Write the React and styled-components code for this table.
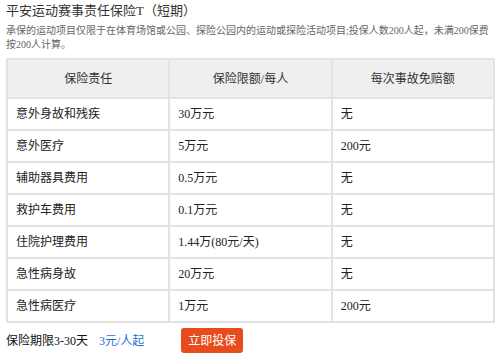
import React from "react";
import styled, { createGlobalStyle } from "styled-components";

const GlobalStyle = createGlobalStyle`
  body {
    margin: 0;
    background: #fff;
    font-family: "Liberation Serif", "Noto Sans CJK SC", serif;
  }
`;

const Page = styled.div`
  width: 500px;
  height: 359px;
  box-sizing: border-box;
  padding: 2px 5px 0 6px;
  color: #333;
`;

const Title = styled.h1`
  margin: 0;
  font-size: 13px;
  font-weight: normal;
  line-height: 17px;
  color: #333;
`;

const Desc = styled.p`
  margin: 5px 0 0;
  font-size: 10px;
  line-height: 14px;
  color: #666;
`;

const Table = styled.table`
  width: 489px;
  margin-top: 6px;
  border-collapse: collapse;
  table-layout: fixed;
  border: 2px solid #e3e3e3;
`;

const HeadCell = styled.th`
  height: 37px;
  padding: 0;
  line-height: 16px;
  background: #efefef;
  border: 2px solid #e3e3e3;
  font-size: 12px;
  font-weight: normal;
  color: #333;
  text-align: center;
`;

const Cell = styled.td`
  height: 30px;
  border: 2px solid #e3e3e3;
  padding: 0 0 0 8px;
  line-height: 16px;
  font-size: 12px;
  color: #222;
`;

const Footer = styled.div`
  display: flex;
  align-items: center;
  margin-top: 4px;
  height: 26px;
`;

const Period = styled.span`
  font-size: 12px;
  color: #111;
`;

const Price = styled.span`
  margin-left: 11px;
  font-size: 12px;
  color: #1f6fd1;
`;

const BuyButton = styled.button`
  margin-left: 37px;
  width: 62px;
  height: 25px;
  border: none;
  border-radius: 3px;
  background: #e84c1d;
  color: #fff;
  font-family: inherit;
  font-size: 12px;
  padding: 0;
  cursor: pointer;
`;

const rows = [
  ["意外身故和残疾", "30万元", "无"],
  ["意外医疗", "5万元", "200元"],
  ["辅助器具费用", "0.5万元", "无"],
  ["救护车费用", "0.1万元", "无"],
  ["住院护理费用", "1.44万(80元/天)", "无"],
  ["急性病身故", "20万元", "无"],
  ["急性病医疗", "1万元", "200元"],
];

export default function App() {
  return (
    <Page>
      <GlobalStyle />
      <Title>平安运动赛事责任保险T（短期）</Title>
      <Desc>
        承保的运动项目仅限于在体育场馆或公园、探险公园内的运动或探险活动项目;投保人数200人起，未满200保费按200人计算。
      </Desc>
      <Table>
        <thead>
          <tr>
            <HeadCell>保险责任</HeadCell>
            <HeadCell>保险限额/每人</HeadCell>
            <HeadCell>每次事故免赔额</HeadCell>
          </tr>
        </thead>
        <tbody>
          {rows.map((r) => (
            <tr key={r[0]}>
              <Cell>{r[0]}</Cell>
              <Cell>{r[1]}</Cell>
              <Cell>{r[2]}</Cell>
            </tr>
          ))}
        </tbody>
      </Table>
      <Footer>
        <Period>保险期限3-30天</Period>
        <Price>3元/人起</Price>
        <BuyButton>立即投保</BuyButton>
      </Footer>
    </Page>
  );
}
